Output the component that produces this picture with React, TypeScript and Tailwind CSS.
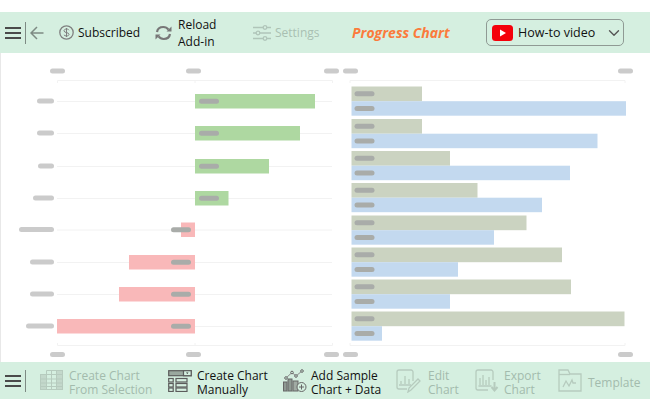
import { ChevronDown } from "lucide-react";

const fontClass = "font-['Open_Sans','Noto_Sans',sans-serif]";

function Hamburger() {
  return (
    <div className="flex w-[16px] flex-col gap-[3px]">
      <div className="h-[2px] bg-[#4a4a4a]" />
      <div className="h-[2px] bg-[#4a4a4a]" />
      <div className="h-[2px] bg-[#4a4a4a]" />
    </div>
  );
}

function BackIcon() {
  return (
    <svg width="14" height="14" viewBox="0 0 14 14" fill="none" stroke="#7d8a83" strokeWidth="1.5">
      <path d="M13.5 7H1M7 1 1 7l6 6" />
    </svg>
  );
}

function SubscribedIcon() {
  return (
    <svg width="15" height="15" viewBox="0 0 15 15" fill="none" stroke="#808080" strokeWidth="1.3">
      <circle cx="7.5" cy="7.5" r="6.7" />
      <path d="M10 5.200C9.400 4.300 8.500 4 7.500 4 6 4 5 4.800 5 5.800c0 2.400 5 1.200 5 3.600C10 10.300 9 11 7.500 11 6.300 11 5.400 10.600 4.900 9.800M7.500 3v9" strokeWidth="1" />
    </svg>
  );
}

function ReloadIcon() {
  return (
    <svg width="19" height="18" viewBox="0 0 19 18" fill="none" stroke="#777" strokeWidth="2.200">
      <path d="M3 8c.5-3 3-5 6.300-5 2.200 0 4 1 5.200 2.600" />
      <path d="M16 10c-.5 3-3 5-6.300 5-2.200 0-4-1-5.200-2.600" />
      <path d="M17.500 2.500v5h-5z" fill="#777" stroke="none" />
      <path d="M1.500 15.500v-5h5z" fill="#777" stroke="none" />
    </svg>
  );
}

function SlidersIcon() {
  return (
    <svg width="18" height="16" viewBox="0 0 18 16" fill="none" stroke="#b0c5b9" strokeWidth="1.3">
      <path d="M0 2.500h10M14 2.500h4M0 8h3M7 8h11M0 13.500h10M14 13.500h4" />
      <circle cx="12" cy="2.500" r="1.800" />
      <circle cx="5" cy="8" r="1.800" />
      <circle cx="12" cy="13.500" r="1.800" />
    </svg>
  );
}

function YouTubeIcon() {
  return (
    <svg width="21" height="16" viewBox="0 0 21 16">
      <rect width="21" height="16" rx="3.500" fill="#f4000a" />
      <path d="M8 4.500v7l6-3.500z" fill="#fff" />
    </svg>
  );
}

function TableIcon() {
  return (
    <svg width="23" height="23" viewBox="0 0 23 23" fill="none" stroke="#b6cbbe" strokeWidth="1">
      <rect x="0.500" y="5.500" width="6" height="15" fill="#c3d8cb" />
      <rect x="16.500" y="1.500" width="6" height="19" fill="#c3d8cb" />
      <path d="M6.500 1.500h10M6.500 20.500h10M.5 5.500h22M.5 10h22M.5 14h22M.5 17.500h22M11.500 1.500v19M6.500 1.500v19" />
    </svg>
  );
}

function ManualIcon() {
  return (
    <svg width="24" height="22" viewBox="0 0 24 22" fill="none" stroke="#5c5c5c" strokeWidth="1.200">
      <rect x="0.700" y="0.700" width="22.500" height="5" fill="#9aa89f" />
      <rect x="15.500" y="0.700" width="7.700" height="5" fill="#d5efe0" />
      <path d="M18 2.400h2.500L19.300 4z" fill="#333" stroke="none" />
      <rect x="0.700" y="8.500" width="4.500" height="3.500" />
      <rect x="0.700" y="13.500" width="4.500" height="3.500" />
      <rect x="0.700" y="18" width="4.500" height="3.500" />
      <rect x="8" y="8.500" width="11" height="3.500" />
      <rect x="8" y="13.500" width="11" height="3.500" />
      <rect x="8" y="18" width="11" height="3.500" />
    </svg>
  );
}

function SampleIcon() {
  return (
    <svg width="24" height="24" viewBox="0 0 24 24" fill="none" stroke="#666" strokeWidth="1">
      <path d="M3 9 9 3.500l4 3.500 6-5" stroke="#888" />
      <circle cx="3" cy="9" r="1.300" fill="#d5efe0" />
      <circle cx="9" cy="3.500" r="1.300" fill="#d5efe0" />
      <circle cx="13" cy="7" r="1.300" fill="#d5efe0" />
      <circle cx="19" cy="2" r="1.300" fill="#d5efe0" />
      <rect x="0.500" y="13" width="3.500" height="9" fill="#8f9a93" />
      <rect x="5" y="10" width="4" height="12" fill="#8f9a93" />
      <rect x="10" y="12" width="5" height="10" fill="#a0aaa3" />
      <circle cx="18.500" cy="18" r="4.500" fill="#d5efe0" />
      <path d="M18.500 15.500v5M16 18h5" />
    </svg>
  );
}

function EditIcon() {
  return (
    <svg width="25" height="24" viewBox="0 0 25 24" fill="none" stroke="#b6cbbe" strokeWidth="1.300">
      <path d="M17 12V3a2 2 0 0 0-2-2H3a2 2 0 0 0-2 2v15a2 2 0 0 0 2 2h8" />
      <path d="M5 15v-3M9 15V7M13 15v-5M3 16h12" />
      <path d="M12 23l1-4 9-9 2 2-9 9z" />
    </svg>
  );
}

function ExportIcon() {
  return (
    <svg width="24" height="23" viewBox="0 0 24 23" fill="none" stroke="#b6cbbe" strokeWidth="1.300">
      <path d="M18 11V3a2 2 0 0 0-2-2H3a2 2 0 0 0-2 2v16a2 2 0 0 0 2 2h10" />
      <path d="M5 16V9M8 16V6M11 16v-5M14 16V8M3.500 17h13" />
      <path d="M19.500 13v7M16.500 18l3 3.500 3-3.500" strokeWidth="2" />
    </svg>
  );
}

function TemplateIcon() {
  return (
    <svg width="24" height="23" viewBox="0 0 24 23" fill="none" stroke="#b6cbbe" strokeWidth="1.300">
      <path d="M1 22V1h9l2 4h11v17z" />
      <path d="M1 5.500h11" />
      <path d="M5 18l3-6 3 5 3-6 1 3h3" />
    </svg>
  );
}

function TwoLines({ top, bottom, leading = "leading-[14px]" }: { top: string; bottom: string; leading?: string }) {
  return (
    <div className={`whitespace-nowrap ${leading}`}>
      <div>{top}</div>
      <div>{bottom}</div>
    </div>
  );
}

// Blurred-out chart: numbers read off the picture, in page pixels
const posNeg = [
  { y: 101, label: 37, end: 315 },
  { y: 133, label: 37, end: 300 },
  { y: 166, label: 38, end: 269 },
  { y: 198, label: 33, end: 228.500 },
  { y: 229.500, label: 19, end: 181 },
  { y: 262, label: 30, end: 129 },
  { y: 294, label: 30, end: 119 },
  { y: 326, label: 26, end: 57 },
];

const paired = [
  { y: 86.500, olive: 422, blue: 626 },
  { y: 119, olive: 422, blue: 597.500 },
  { y: 151, olive: 450, blue: 570 },
  { y: 183, olive: 477.500, blue: 542 },
  { y: 215.500, olive: 526.500, blue: 494 },
  { y: 247.500, olive: 562, blue: 458 },
  { y: 279.500, olive: 571, blue: 450 },
  { y: 311.500, olive: 624.500, blue: 382 },
];

function Pill({ x, y, w, fill = "#cbcbcb" }: { x: number; y: number; w: number; fill?: string }) {
  return <rect x={x} y={y - 2.500} width={w} height={5} rx={2.500} fill={fill} />;
}

function Charts() {
  return (
    <svg width="649" height="309" viewBox="1 53 649 309" className="blur-[0.6px]">
      {/* axes */}
      <g stroke="#f2f2f2" fill="none">
        <path d="M57.500 83V80.500H332.500V83M195 80.500V83" />
        <path d="M57.500 343V345.500H332.500V343M195 345.500V343" />
        <path d="M350 83V80.500H625V83" />
        <path d="M350 343V345.500H625V343" />
        {posNeg.map((r) => (
          <path key={r.y} d={`M57 ${r.y + 0.500}H332`} />
        ))}
      </g>
      {[71, 354.500].map((y) => (
        <g key={y}>
          <Pill x={50} y={y} w={15} />
          <Pill x={186} y={y} w={15} />
          <Pill x={324} y={y} w={15} />
          <Pill x={343} y={y} w={15} />
          <Pill x={618} y={y} w={15} />
        </g>
      ))}

      {/* left chart */}
      {posNeg.map((r) => {
        const positive = r.end > 195;
        const x = positive ? 195 : r.end;
        const w = positive ? r.end - 195 : 195 - r.end;
        return (
          <g key={r.y}>
            <Pill x={r.label} y={r.y} w={54 - r.label} />
            <rect x={x} y={r.y - 7} width={w} height={14.500} fill={positive ? "#aed8a1" : "#f9b8b9"} />
            <Pill x={positive ? 199 : 171} y={r.y + 0.300} w={20} fill="#a9aca9" />
          </g>
        );
      })}

      {/* right chart */}
      {paired.map((r) => (
        <g key={r.y}>
          <rect x={351.500} y={r.y} width={r.olive - 351.500} height={14.700} fill="#cbd3c1" />
          <rect x={351.500} y={r.y + 14.700} width={r.blue - 351.500} height={14.500} fill="#c3d9ef" />
          <Pill x={354.500} y={r.y + 7.300} w={20} fill="#a9aca9" />
          <Pill x={354.500} y={r.y + 22} w={20} fill="#a9aca9" />
        </g>
      ))}
    </svg>
  );
}

export default function App() {
  return (
    <div className={`flex h-[411px] w-[650px] flex-col overflow-hidden bg-white pt-[12px] pb-[12px] text-[12px] leading-[14px] text-[#111] ${fontClass}`}>
      {/* top toolbar */}
      <div className="flex h-[41px] items-center bg-[#d5efe0] pl-[5px]">
        <Hamburger />
        <div className="ml-[4px] h-[22px] w-[1px] bg-[#7d8a83]" />
        <div className="ml-[4px]">
          <BackIcon />
        </div>
        <div className="ml-[15px] flex items-center gap-[4px]">
          <SubscribedIcon />
          <span className="w-[62px] whitespace-nowrap">Subscribed</span>
        </div>
        <div className="ml-[14px] flex items-center gap-[5px]">
          <ReloadIcon />
          <div className="w-[39px]">
            <TwoLines top="Reload" bottom="Add-in" leading="leading-[17px]" />
          </div>
        </div>
        <div className="ml-[36px] flex items-center gap-[4px] text-[#a9bfb2]">
          <SlidersIcon />
          <span className="w-[44px]">Settings</span>
        </div>
        <span className="ml-[33px] w-[97px] text-[14px] font-bold whitespace-nowrap text-[#fb7b3c] italic">
          Progress Chart
        </span>
        <div className="ml-[37px] flex h-[27px] w-[138px] items-center rounded-[5px] border-[1.5px] border-[#8f9a94] pl-[5px]">
          <YouTubeIcon />
          <span className="ml-[5px] w-[87px] text-[12.5px] whitespace-nowrap">How-to video</span>
          <ChevronDown size={18} strokeWidth={1.800} className="text-[#555]" />
        </div>
      </div>

      {/* chart area */}
      <div className="flex-1 border-l border-[#e8e8e8]">
        <Charts />
      </div>

      {/* bottom toolbar */}
      <div className="flex h-[37px] items-center bg-[#d5efe0] pl-[5px]">
        <Hamburger />
        <div className="ml-[4px] h-[22px] w-[1px] bg-[#7d8a83]" />
        <div className="ml-[14px] flex w-[128px] items-center gap-[6px] text-[#a3bbad]">
          <TableIcon />
          <div className="pt-[4px]">
            <TwoLines top="Create Chart" bottom="From Selection" />
          </div>
        </div>
        <div className="flex w-[115px] items-center gap-[5px]">
          <ManualIcon />
          <div className="pt-[4px]">
            <TwoLines top="Create Chart" bottom="Manually" />
          </div>
        </div>
        <div className="flex w-[113px] items-center gap-[4px]">
          <SampleIcon />
          <div className="pt-[4px]">
            <TwoLines top="Add Sample" bottom="Chart + Data" />
          </div>
        </div>
        <div className="flex w-[79px] items-center gap-[7px] text-[#a3bbad]">
          <EditIcon />
          <div className="pt-[4px]">
            <TwoLines top="Edit" bottom="Chart" />
          </div>
        </div>
        <div className="flex w-[83px] items-center gap-[5px] text-[#a3bbad]">
          <ExportIcon />
          <div className="pt-[4px]">
            <TwoLines top="Export" bottom="Chart" />
          </div>
        </div>
        <div className="flex items-center gap-[6px] text-[#a3bbad]">
          <TemplateIcon />
          <span className="pt-[5px]">Template</span>
        </div>
      </div>
    </div>
  );
}
